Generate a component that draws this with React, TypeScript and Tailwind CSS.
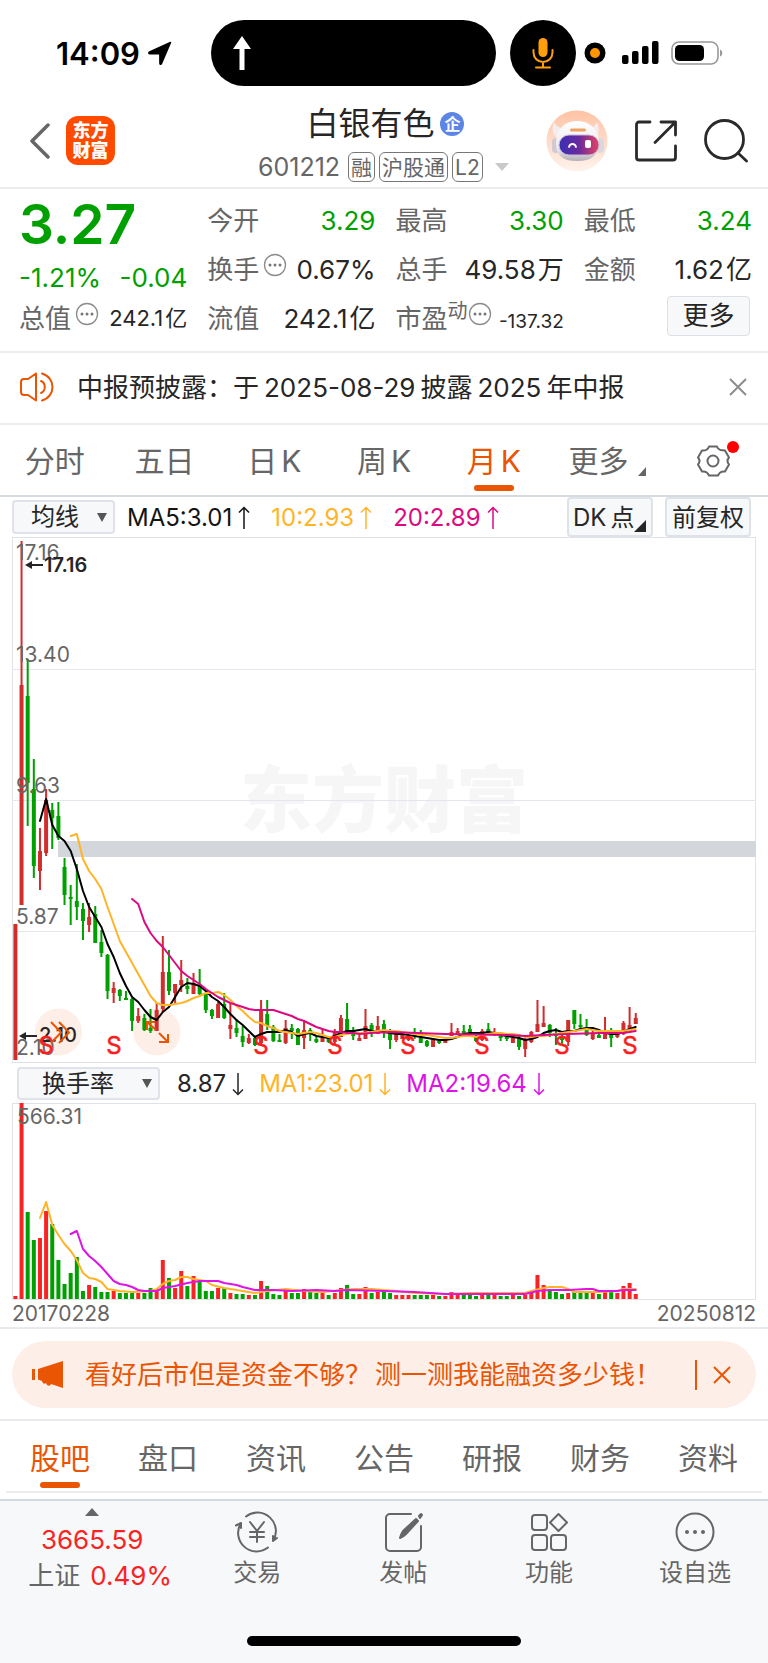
import type { ReactNode } from 'react';

type Dir = 'R' | 'G';
type Candle = [Dir, number, number, number, number];
type Point = [number, number];

const GREEN = '#00a000';
const RED = '#fa2323';
const CANDLE_RED = '#d02d2d';
const STEP = 6.142;
const ORIGIN = 15.4;
const barX = (i: number) => ORIGIN + i * STEP;

// direction, wick top, body top, body bottom, wick bottom
const candles: Candle[] = [
  ['R', 924, 924, 1060, 1060], ['R', 541, 685, 905, 905], ['G', 659, 696, 783, 826], ['G', 759, 789, 866, 878],
  ['R', 828, 851, 871, 890], ['R', 789, 800, 853, 856], ['G', 803, 810, 818, 849], ['G', 802, 816, 838, 840],
  ['G', 858, 867, 895, 905], ['G', 885, 897, 899, 925], ['G', 864, 901, 907, 920], ['G', 903, 909, 921, 940],
  ['R', 903, 917, 925, 932], ['G', 906, 914, 943, 943], ['G', 930, 942, 953, 957], ['G', 954, 955, 991, 999],
  ['R', 982, 988, 993, 1003], ['G', 989, 990, 996, 1001], ['G', 991, 998, 1000, 1000], ['G', 998, 999, 1021, 1031],
  ['R', 1008, 1016, 1021, 1023], ['G', 1014, 1018, 1030, 1031], ['G', 1009, 1028, 1031, 1033], ['R', 1003, 1010, 1031, 1031],
  ['R', 936, 972, 1009, 1012], ['G', 950, 972, 991, 995], ['R', 984, 984, 993, 1003], ['R', 960, 980, 985, 992],
  ['G', 978, 986, 989, 994], ['R', 973, 983, 994, 994], ['G', 969, 985, 994, 995], ['G', 991, 993, 1010, 1013],
  ['G', 1009, 1010, 1016, 1019], ['R', 1002, 1004, 1018, 1018], ['G', 993, 1004, 1018, 1019], ['R', 1003, 1025, 1029, 1039],
  ['G', 1019, 1028, 1033, 1037], ['G', 1026, 1036, 1042, 1047], ['R', 1034, 1038, 1043, 1044], ['G', 1036, 1038, 1045, 1046],
  ['R', 1000, 1010, 1043, 1046], ['G', 1000, 1014, 1026, 1030], ['G', 1025, 1027, 1041, 1042], ['G', 1034, 1040, 1042, 1042],
  ['R', 1020, 1028, 1043, 1044], ['G', 1024, 1028, 1031, 1039], ['G', 1028, 1029, 1045, 1045], ['R', 1022, 1030, 1038, 1049],
  ['G', 1028, 1030, 1033, 1041], ['G', 1037, 1039, 1042, 1043], ['R', 1029, 1037, 1042, 1042], ['G', 1037, 1038, 1042, 1043],
  ['R', 1029, 1032, 1042, 1044], ['R', 1015, 1018, 1037, 1037], ['G', 1003, 1019, 1031, 1032], ['G', 1027, 1031, 1036, 1040],
  ['R', 1035, 1038, 1041, 1041], ['R', 1009, 1026, 1039, 1039], ['G', 1023, 1025, 1032, 1037], ['R', 1016, 1026, 1034, 1034],
  ['G', 1020, 1024, 1033, 1038], ['G', 1029, 1031, 1040, 1049], ['R', 1033, 1035, 1040, 1042], ['R', 1034, 1035, 1039, 1039],
  ['R', 1035, 1037, 1040, 1041], ['G', 1028, 1032, 1036, 1039], ['G', 1030, 1038, 1043, 1043], ['G', 1040, 1041, 1046, 1047],
  ['R', 1038, 1039, 1047, 1047], ['G', 1039, 1041, 1043, 1044], ['R', 1039, 1040, 1043, 1043], ['R', 1023, 1032, 1036, 1036],
  ['R', 1028, 1031, 1034, 1034], ['G', 1025, 1031, 1033, 1035], ['G', 1025, 1029, 1032, 1035], ['G', 1035, 1037, 1041, 1042],
  ['R', 1029, 1031, 1040, 1041], ['G', 1023, 1029, 1033, 1034], ['R', 1028, 1032, 1034, 1036], ['G', 1034, 1036, 1038, 1041],
  ['G', 1036, 1037, 1039, 1041], ['R', 1037, 1038, 1043, 1043], ['G', 1035, 1039, 1047, 1050], ['R', 1038, 1040, 1049, 1057],
  ['R', 1031, 1032, 1042, 1043], ['R', 1000, 1024, 1032, 1032], ['R', 1006, 1023, 1027, 1027], ['G', 1024, 1025, 1033, 1037],
  ['G', 1028, 1034, 1036, 1045], ['G', 1035, 1037, 1040, 1045], ['R', 1020, 1020, 1042, 1046], ['G', 1010, 1010, 1024, 1029],
  ['G', 1014, 1025, 1027, 1030], ['G', 1019, 1028, 1035, 1036], ['R', 1030, 1033, 1039, 1040], ['G', 1034, 1035, 1038, 1038],
  ['R', 1017, 1031, 1039, 1039], ['G', 1028, 1030, 1038, 1047], ['R', 1031, 1034, 1037, 1038], ['R', 1021, 1023, 1034, 1035],
  ['R', 1007, 1025, 1031, 1031], ['R', 1013, 1018, 1024, 1024],
];

const from = (start: number, ys: number[]): Point[] => ys.map((y, k) => [start + k, y]);

const ma5 = from(4, [
  821, 799, 825, 836, 841, 851, 869, 891, 907, 917, 927, 944, 957, 973, 986, 997, 1002, 1010, 1017, 1020, 1012, 1007, 997,
  987, 983, 984, 986, 991, 997, 1001, 1007, 1014, 1020, 1025, 1031, 1037, 1034, 1032, 1032, 1032, 1030, 1032, 1036, 1034,
  1033, 1036, 1037, 1038, 1036, 1033, 1031, 1031, 1030, 1029, 1031, 1032, 1032, 1033, 1034, 1034, 1035, 1036, 1037, 1038,
  1039, 1040, 1040, 1039, 1037, 1034, 1033, 1033, 1033, 1032, 1033, 1035, 1036, 1037, 1038, 1040, 1039, 1037, 1033, 1031,
  1030, 1032, 1031, 1031, 1029, 1028, 1028, 1030, 1033, 1034, 1034, 1032, 1029, 1027,
]);

const ma10 = from(9, [
  836, 834, 859, 871, 879, 889, 907, 924, 941, 952, 963, 974, 985, 996, 1003, 1005, 1005, 1004, 1003, 1001, 998, 996, 993,
  993, 992, 995, 1000, 1006, 1011, 1017, 1022, 1023, 1026, 1028, 1031, 1032, 1033, 1034, 1033, 1032, 1033, 1035, 1037,
  1037, 1035, 1034, 1033, 1033, 1033, 1032, 1031, 1030, 1031, 1031, 1032, 1033, 1034, 1035, 1035, 1036, 1037, 1038, 1038,
  1037, 1036, 1036, 1037, 1036, 1034, 1033, 1033, 1034, 1034, 1035, 1037, 1037, 1036, 1036, 1035, 1034, 1033, 1032, 1031,
  1030, 1029, 1030, 1031, 1031, 1031, 1031, 1031, 1030, 1029,
]);

const ma20: Point[] = [
  ...from(19, [
    899, 904, 922, 933, 941, 947, 955, 963, 971, 976, 980, 984, 989, 993, 997, 1000, 1003, 1005, 1007, 1009, 1010, 1010,
    1010, 1010, 1012, 1014, 1016, 1019, 1021, 1024, 1027, 1029, 1031, 1032, 1032, 1033, 1033, 1034,
  ]),
  [58, 1033], [61, 1032], [70, 1034], [80, 1035], [83, 1036], [86, 1035], [90, 1034], [95, 1033], [99, 1033], [101, 1031],
];

const turnover = [
  3, 196, 87, 59, 61, 88, 75, 39, 15, 26, 42, 8, 14, 12, 7, 7, 8, 6, 6, 6, 6, 6, 11, 10, 39, 21, 11, 28, 13, 23, 18, 8, 8,
  11, 11, 6, 5, 5, 4, 4, 18, 13, 5, 4, 8, 6, 6, 10, 8, 6, 7, 4, 6, 11, 14, 5, 5, 12, 6, 7, 7, 6, 4, 4, 4, 4, 4, 4, 4, 3, 3,
  7, 6, 4, 4, 3, 4, 4, 4, 3, 3, 4, 3, 4, 7, 24, 14, 8, 7, 5, 6, 7, 7, 7, 6, 5, 9, 7, 6, 13, 16, 5,
];

const turnoverMa1: Point[] = [
  [4, 1217], [5, 1201], [6, 1224], [7, 1234], [8, 1243], [9, 1250], [10, 1259], [11, 1272], [12, 1277], [13, 1278],
  [14, 1281], [15, 1288], [17, 1290], [19, 1291], [22, 1290], [23, 1288], [24, 1283], [25, 1280], [26, 1279], [27, 1276],
  [28, 1276], [29, 1278], [31, 1280], [32, 1284], [34, 1287], [36, 1289], [39, 1292], [41, 1290], [44, 1288], [47, 1290],
  [50, 1291], [55, 1288], [58, 1288], [62, 1290], [65, 1292], [70, 1293], [74, 1292], [80, 1292], [83, 1292], [84, 1290],
  [86, 1287], [87, 1286], [89, 1286], [90, 1288], [91, 1291], [95, 1291], [98, 1290], [99, 1288], [101, 1288],
];

const turnoverMa2: Point[] = [
  [9, 1233], [10, 1230], [11, 1248], [12, 1255], [13, 1260], [14, 1266], [15, 1273], [16, 1280], [17, 1283], [18, 1284],
  [19, 1286], [20, 1289], [21, 1290], [23, 1290], [24, 1287], [26, 1285], [28, 1282], [30, 1280], [33, 1280], [34, 1282],
  [36, 1284], [37, 1286], [39, 1289], [42, 1289], [45, 1290], [49, 1289], [52, 1290], [54, 1289], [60, 1290], [65, 1291],
  [70, 1293], [83, 1293], [85, 1290], [87, 1289], [90, 1289], [93, 1288], [94, 1288], [95, 1290], [98, 1290], [99, 1289],
  [101, 1289],
];

const toPoints = (pts: Point[]) => pts.map(([i, y]) => `${barX(i).toFixed(1)},${y}`).join(' ');

function Line({ pts, color }: { pts: Point[]; color: string }) {
  return <polyline points={toPoints(pts)} fill="none" stroke={color} strokeWidth="2" strokeLinejoin="round" strokeLinecap="round" />;
}

function PriceChart() {
  const axis: [string, number][] = [['17.16', 560], ['13.40', 662], ['9.63', 793], ['5.87', 924], ['2.10', 1055]];
  const signals = [46, 114, 261, 335, 408, 482, 562, 630];
  return (
    <svg viewBox="12 537 744 527" className="block h-auto w-full" role="img" aria-label="月K线">
      <text x="384" y="826" textAnchor="middle" fontSize="72" fontWeight="900" fill="#f6f6f6">东方财富</text>
      <rect x="12.5" y="537.5" width="743" height="525" fill="none" stroke="#dfe2e6" />
      {[669.5, 800.5, 931.5].map((y) => <path key={y} d={`M12 ${y}H756`} stroke="#e3e7ed" strokeWidth="1" />)}
      <rect x="58" y="841" width="698" height="16" fill="#d3d6db" />
      <circle cx="58.5" cy="1032" r="23.5" fill="#fdeee7" />
      <circle cx="157" cy="1032" r="23.5" fill="#fdeee7" />
      {candles.map(([d, high, top, bottom, low], i) => {
        const fill = d === 'R' ? CANDLE_RED : GREEN;
        return (
          <g key={i} fill={fill}>
            <rect x={barX(i) - 1} y={high} width="2" height={low - high} />
            <rect x={barX(i) - 2} y={top} width="4" height={Math.max(2, bottom - top)} />
          </g>
        );
      })}
      <g fontSize="21" fill="#666">
        {axis.map(([t, y]) => <text key={t} x="16" y={y}>{t}</text>)}
      </g>
      <g fill="#262626" fontSize="20" fontWeight="600">
        <text x="44" y="572">17.16</text>
        <path d="M25 565l7-4v8zM31 564h12v2H31z" />
        <text x="39" y="1042" fontWeight="500">2.10</text>
        <path d="M19 1036l7-4v8zM25 1035h12v2H25z" />
      </g>
      <Line pts={ma5} color="#000" />
      <Line pts={ma10} color="#ffb428" />
      <Line pts={ma20} color="#dc0a82" />
      <g fill="none" stroke="#ea5504" strokeWidth="2">
        <path d="M51 1022l10 10.500-10 10.500M59 1022l10 10.500-10 10.500" />
        <path d="M147 1030v-8h8M147 1022l9 8M168 1034v8h-9M168 1042l-9-9" />
      </g>
      <g fontSize="24" fill="#fa1e1e" textAnchor="middle" stroke="#fa1e1e" strokeWidth="0.500">
        {signals.map((x) => <text key={x} x={x} y="1054">S</text>)}
      </g>
    </svg>
  );
}

function TurnoverChart() {
  return (
    <svg viewBox="12 1102 744 197" className="block h-auto w-full" role="img" aria-label="换手率">
      <rect x="12.5" y="1102.5" width="743" height="196" fill="none" stroke="#dfe2e6" />
      {turnover.map((h, i) => (
        <rect key={i} x={barX(i) - 2} y={1298 - h} width="4" height={h} fill={candles[i][0] === 'R' ? RED : GREEN} />
      ))}
      <text x="17" y="1123" fontSize="21" fill="#666">566.31</text>
      <Line pts={turnoverMa1} color="#ffb428" />
      <Line pts={turnoverMa2} color="#dc14e6" />
    </svg>
  );
}

function InfoDots() {
  return (
    <svg viewBox="0 0 24 24" className="mb-2.5 size-6 shrink-0">
      <circle cx="12" cy="12" r="10.500" fill="none" stroke="#8c8c8c" strokeWidth="1.300" />
      <g fill="#777"><circle cx="7" cy="12" r="1.500" /><circle cx="12" cy="12" r="1.500" /><circle cx="17" cy="12" r="1.500" /></g>
    </svg>
  );
}

function Stat({ label, value, unit, extra, tone = 'text-[#262626]', size = 'text-[26px]' }: {
  label: string; value: string; unit?: string; extra?: ReactNode; tone?: string; size?: string;
}) {
  return (
    <div className="flex h-[49px] items-center justify-between whitespace-nowrap">
      <dt className="flex items-center gap-1 text-[26px] text-[#666]">{label}{extra}</dt>
      <dd className={`flex gap-0.5 ${size} ${tone}`}><span>{value}</span>{unit && <span>{unit}</span>}</dd>
    </div>
  );
}

function TrendArrow({ down = false }: { down?: boolean }) {
  return (
    <svg viewBox="0 0 12 24" className="h-6 w-3 shrink-0" fill="none" stroke="currentColor" strokeWidth="1.500">
      <path d={down ? 'M6 1v22M1 17.500l5 5 5-5' : 'M6 23V1.500M1 6.500l5-5 5 5'} />
    </svg>
  );
}

function StatusBar() {
  return (
    <div className="flex h-24 items-center pt-2.5 pl-14">
      <div className="flex w-[155px] items-center gap-2">
        <span className="text-[31px] leading-none font-semibold text-black">14:09</span>
        <svg viewBox="0 0 24 24" className="size-6 shrink-0"><path d="M22.500 1.500 13.500 22.500c-.5 1.200-1.600 1-1.600-.2V12.800H2C.6 12.800.4 11.600 1.600 11z" stroke="#000" strokeLinejoin="round" strokeWidth="1.500" /></svg>
      </div>
      <div className="flex h-[66px] w-[285px] items-center rounded-full bg-black pl-[22px]">
        <svg viewBox="0 0 18 34" className="h-[34px] w-[18px]"><path d="M9 0 18 13H11.500V34h-5V13H0z" fill="#fff" /></svg>
      </div>
      <div className="ml-3.5 flex size-[66px] items-center justify-center rounded-full bg-black">
        <svg viewBox="0 0 22 32" className="h-8 w-[22px]" fill="none" stroke="#ff9f0a" strokeWidth="2" strokeLinecap="round">
          <rect x="6.500" y="1" width="9" height="19" rx="4.500" fill="#ff9f0a" stroke="none" />
          <path d="M1.500 13v2.500a9.500 9.500 0 0 0 19 0V13M11 25v5M4 30.500h14" />
        </svg>
      </div>
      <svg viewBox="0 0 22 22" className="ml-2 size-[22px]"><circle cx="11" cy="11" r="10.500" /><circle cx="11" cy="11" r="5" fill="#ff9500" /></svg>
      <svg viewBox="0 0 37 24" className="ml-4 h-6 w-[37px]">
        <rect x="0" y="14" width="6.500" height="9" rx="2" /><rect x="10" y="10" width="6.500" height="13" rx="2" />
        <rect x="20" y="5" width="6.500" height="18" rx="2" /><rect x="30" y="0" width="6.500" height="23" rx="2" />
      </svg>
      <svg viewBox="0 0 52 24" className="ml-3 h-6 w-[52px]">
        <rect x="1" y="1" width="46" height="22" rx="7" fill="none" stroke="#999" strokeWidth="1.600" />
        <rect x="4" y="4" width="29" height="16" rx="4.500" /><path d="M49 8.500c3 1 3 6 0 7z" fill="#999" />
      </svg>
    </div>
  );
}

function Robot() {
  return (
    <svg viewBox="0 0 62 62" className="size-[62px]">
      <defs>
        <linearGradient id="halo" x1="0" y1="0" x2="0" y2="1"><stop offset="0" stopColor="#fec3a4" /><stop offset="1" stopColor="#fff3ed" /></linearGradient>
        <linearGradient id="visor" x1="0" y1="0" x2="1" y2="0"><stop offset="0" stopColor="#3a2fb5" /><stop offset="0.500" stopColor="#6a2a9c" /><stop offset="1" stopColor="#e6435f" /></linearGradient>
        <linearGradient id="shell" x1="0" y1="0" x2="0" y2="1"><stop offset="0" stopColor="#fff" /><stop offset="0.700" stopColor="#ece9ec" /><stop offset="1" stopColor="#b5aeb5" /></linearGradient>
      </defs>
      <circle cx="31" cy="31" r="30.500" fill="url(#halo)" />
      <path d="M8 12c-3 8-1 13 4 16l8-9c-6 0-10-3-12-7zM51 12c3 8 2 13-3 16l-8-9c6 0 9-3 11-7z" fill="#f3edee" />
      <rect x="6" y="28" width="8" height="15" rx="4" fill="#cfcad2" /><rect x="50" y="28" width="8" height="15" rx="4" fill="#dcd7dc" />
      <path d="M10 33C10 20 18 11 31 11s22 9 22 22c0 12-7 18-22 18S10 45 10 33z" fill="url(#shell)" />
      <rect x="24" y="18.500" width="16" height="3" rx="1.500" fill="#f0a060" />
      <rect x="13" y="25" width="40" height="20" rx="10" fill="url(#visor)" stroke="#c9b8d8" strokeWidth="1" />
      <path d="M23 37c1-4 6-4 7 0" fill="none" stroke="#fff" strokeWidth="1.800" strokeLinecap="round" />
      <rect x="39" y="30" width="6" height="8" rx="2" fill="#fff" />
    </svg>
  );
}

function Tag({ children }: { children: ReactNode }) {
  return <span className="flex h-[30px] items-center rounded-md border-[1.5px] border-[#777] px-0.5 text-[21px] leading-none text-[#666]">{children}</span>;
}

function Header() {
  return (
    <header className="flex h-[93px] items-start border-b-2 border-[#ededed] pr-5 pl-[29px]">
      <div className="mt-5 flex w-[229px] items-center gap-4">
        <button aria-label="返回" className="shrink-0">
          <svg viewBox="0 0 21 36" className="h-9 w-[21px]" fill="none" stroke="#666" strokeWidth="3.500" strokeLinecap="round" strokeLinejoin="round"><path d="M19 2 3 18l16 16" /></svg>
        </button>
        <div className="flex size-[49px] flex-col items-center justify-center rounded-xl bg-[#ff4a00] text-[18px] leading-[20px] font-black text-white">
          <span>东方</span><span>财富</span>
        </div>
      </div>
      <div className="flex flex-col items-center">
        <h1 className="mt-[5px] flex items-center gap-1.5 pl-1 text-[32px] leading-[46px] text-[#262626]">
          白银有色
          <span className="flex size-6 items-center justify-center rounded-full bg-[#5b86e5] text-[16px] leading-none font-bold text-white">企</span>
        </h1>
        <div className="mt-[5px] flex items-center gap-1">
          <span className="mr-1 text-[25px] leading-none text-[#666]">601212</span>
          <Tag>融</Tag><Tag>沪股通</Tag><Tag>L2</Tag>
          <button aria-label="展开" className="ml-2"><svg viewBox="0 0 14 8" className="h-2 w-3.5"><path d="M0 0h14L7 8z" fill="#c9c9c9" /></svg></button>
        </div>
      </div>
      <div className="mt-[14px] ml-auto flex items-center gap-[27px]">
        <button aria-label="智能助手"><Robot /></button>
        <button aria-label="分享">
          <svg viewBox="0 0 42 42" className="size-[42px]" fill="none" stroke="#2a2a2a" strokeWidth="2.800" strokeLinecap="round" strokeLinejoin="round">
            <path d="M15 2H4a2.500 2.500 0 0 0-2.500 2.500v33A2.500 2.500 0 0 0 4 40h34a2.500 2.500 0 0 0 2.500-2.500V26M26 2h14.500v13M39 3.500 20 22.500" />
          </svg>
        </button>
        <button aria-label="搜索">
          <svg viewBox="0 0 44 44" className="size-11" fill="none" stroke="#2a2a2a" strokeWidth="2.800" strokeLinecap="round"><circle cx="20.500" cy="20.500" r="19" /><path d="m34 34 8.500 8" /></svg>
        </button>
      </div>
    </header>
  );
}

function Quote() {
  return (
    <section className="grid grid-cols-4 gap-x-5 border-b-2 border-[#ededed] pt-[7px] pr-4 pb-2 pl-[19px]">
      <div>
        <p className="h-[60px] text-[55px] leading-[56px] font-semibold text-[#00a000]">3.27</p>
        <p className="flex h-[42px] items-center justify-between text-[26px] text-[#00a000]"><span>-1.21%</span><span>-0.04</span></p>
        <dl className="-mt-1"><Stat label="总值" value="242.1" unit="亿" extra={<InfoDots />} size="text-[22px]" /></dl>
      </div>
      <dl><Stat label="今开" value="3.29" tone="text-[#00a000]" /><Stat label="换手" value="0.67%" extra={<InfoDots />} /><Stat label="流值" value="242.1" unit="亿" /></dl>
      <dl><Stat label="最高" value="3.30" tone="text-[#00a000]" /><Stat label="总手" value="49.58" unit="万" />
        <Stat label="市盈" value="-137.32" size="pt-2 text-[19px]" extra={<span className="-ml-1 flex items-center"><sup className="top-0 mb-4 text-[20px] leading-none">动</sup><InfoDots /></span>} /></dl>
      <dl><Stat label="最低" value="3.24" tone="text-[#00a000]" /><Stat label="金额" value="1.62" unit="亿" />
        <div className="flex justify-end pt-0.5 pr-0.5"><button className="h-10 w-[83px] rounded border border-[#dcdfe6] bg-[#f7f8fa] text-[26px] leading-none text-[#262626]">更多</button></div></dl>
    </section>
  );
}

function Notice() {
  return (
    <section className="flex h-[72px] items-center border-b-2 border-[#ededed] pr-[21px] pb-0.5 pl-5 text-[26px] text-[#262626]">
      <svg viewBox="0 0 34 30" className="mr-[23px] h-[30px] w-[34px] shrink-0" fill="none" stroke="#ea5504" strokeWidth="2" strokeLinecap="round" strokeLinejoin="round">
        <path d="M16 1.500 8 7H4a3 3 0 0 0-3 3v10a3 3 0 0 0 3 3h4l8 5.500zM21 9c5 2 5 10 0 12M22 1.500c14 4 14 23 0 27" />
      </svg>
      <p className="flex flex-1 gap-[5px] whitespace-nowrap"><span>中报预披露：于</span><span>2025-08-29</span><span>披露</span><span>2025</span><span>年中报</span></p>
      <button aria-label="关闭公告"><svg viewBox="0 0 18 18" className="size-[18px]" stroke="#8c8c8c" strokeWidth="2"><path d="m1 1 16 16M17 1 1 17" /></svg></button>
    </section>
  );
}

function PeriodTabs() {
  return (
    <nav className="grid h-[72px] grid-cols-7 border-b-2 border-[#d6dbe0] pt-0.5 text-[30px] text-[#666]">
      <button>分时</button>
      <button>五日</button>
      <button className="flex items-center justify-center gap-1"><span>日</span><span>K</span></button>
      <button className="flex items-center justify-center gap-1"><span>周</span><span>K</span></button>
      <button className="relative flex items-center justify-center gap-1 text-[#ea5504]">
        <span>月</span><span>K</span>
        <span className="absolute bottom-1 left-1/2 h-1.5 w-10 -translate-x-1/2 rounded-full bg-[#ea5504]" />
      </button>
      <button className="flex items-center justify-center gap-2.5 pl-2">更多<svg viewBox="0 0 8 9" className="mt-5 h-[9px] w-2"><path d="M8 0v9H0z" fill="#666" /></svg></button>
      <button aria-label="设置" className="flex items-center justify-center">
        <span className="relative">
          <svg viewBox="0 0 36 32" className="h-8 w-9" fill="none" stroke="#666" strokeWidth="2" strokeLinejoin="round">
            <path d="M14 1.500h8q1.500 4 6 3.800l2 .2 4 7q-3 3.500 0 7l-4 7q-5-.8-7 4h-9q-2-4.800-7-4l-4-7q3-3.500 0-7l4-7q5.500.5 7-4z" /><circle cx="18" cy="16" r="5.500" />
          </svg>
          <span className="absolute -top-1 -right-2 size-3 rounded-full bg-[#ff0000]" />
        </span>
      </button>
    </nav>
  );
}

function Indicator({ children, className, down }: { children: ReactNode; className: string; down?: boolean }) {
  return <span className={`flex items-center gap-1.5 ${className}`}>{children}<TrendArrow down={down} /></span>;
}

function Caret() {
  return <svg viewBox="0 0 10 9" className="h-[9px] w-2.5"><path d="M0 0h10L5 9z" fill="#555" /></svg>;
}

const pill = 'rounded border-2 border-[#dfe2e8] bg-[#f7f8fa] text-[#262626]';

function Charts() {
  return (
    <section className="px-3">
      <div className="flex h-10 items-center text-[24px] whitespace-nowrap">
        <button className={`${pill} flex h-[34px] w-[103px] items-center justify-between pr-1.5 pl-[17px] leading-none`}>均线<Caret /></button>
        <Indicator className="ml-3 pt-0.5 text-[#141414]">MA5:3.01</Indicator>
        <Indicator className="ml-[21px] pt-0.5 text-[#ffb428]">10:2.93</Indicator>
        <Indicator className="ml-[21px] pt-0.5 text-[#dc0a82]">20:2.89</Indicator>
        <button className={`${pill} mr-3 ml-auto flex h-10 w-[86px] items-center pt-0.5 pl-1 leading-none`}>DK<span className="ml-1">点</span><svg viewBox="0 0 12 12" className="mt-4 size-3 shrink-0"><path d="M12 0v12H0z" fill="#262626" /></svg></button>
        <button className={`${pill} mr-[5px] h-10 w-[86px] pt-0.5 leading-none`}>前复权</button>
      </div>
      <PriceChart />
      <div className="flex h-[39px] items-center pl-[5px] text-[24px] whitespace-nowrap">
        <button className={`${pill} flex h-[33px] w-[143px] items-center justify-between pr-1.5 pl-[23px] leading-none`}>换手率<Caret /></button>
        <Indicator down className="ml-[17px] text-[#262626]">8.87</Indicator>
        <Indicator down className="ml-[15px] text-[#ffb428]">MA1:23.01</Indicator>
        <Indicator down className="ml-[15px] text-[#dc14e6]">MA2:19.64</Indicator>
      </div>
      <TurnoverChart />
      <div className="flex justify-between text-[21px] leading-[27px] text-[#666]"><time>20170228</time><time>20250812</time></div>
    </section>
  );
}

function Promo() {
  return (
    <section className="border-y-2 border-[#e8eaee] px-3 pt-3 pb-[11px]">
      <div className="flex h-[67px] items-center rounded-full bg-[#fdeee7] pr-[25px] pl-5 text-[26px] text-[#ea5504]">
        <svg viewBox="0 0 32 27" className="mr-[21px] h-[27px] w-8 shrink-0" fill="#ea5504"><path d="M0 8h3v11H0zM6 8 31 0v27l-12-4q-1 3-4 1l-1-2q-3 2-4-2l-4-1.500z" /></svg>
        <a href="#finance" className="flex flex-1 gap-1 whitespace-nowrap"><span>看好后市但是资金不够？</span><span>测一测我能融资多少钱！</span></a>
        <button aria-label="关闭" className="border-l-2 border-[#ea5504] py-[6px] pl-4"><svg viewBox="0 0 18 18" className="size-[18px]" stroke="#ea5504" strokeWidth="2"><path d="m1 1 16 16M17 1 1 17" /></svg></button>
      </div>
    </section>
  );
}

function SectionTabs() {
  return (
    <div className="px-1.5 pb-1.5">
      <nav className="grid h-[72px] grid-cols-7 border-b-2 border-[#ededed] text-[30px] text-[#666]">
        {['股吧', '盘口', '资讯', '公告', '研报', '财务', '资料'].map((t, i) => (
          <button key={t} className={i === 0 ? 'relative pt-1 text-[#ea5504]' : 'pt-1'}>
            {t}{i === 0 && <span className="absolute bottom-[3px] left-1/2 h-1.5 w-10 -translate-x-1/2 rounded-full bg-[#ea5504]" />}
          </button>
        ))}
      </nav>
    </div>
  );
}

function NavItem({ label, children }: { label: string; children: ReactNode }) {
  return (
    <button className="flex flex-1 flex-col items-center gap-0.5 pt-2.5 text-[24px] leading-[36px] text-[#666]">
      <svg viewBox="0 0 44 42" className="h-[42px] w-11" fill="none" stroke="#666" strokeWidth="2" strokeLinecap="round" strokeLinejoin="round">{children}</svg>
      {label}
    </button>
  );
}

function BottomBar() {
  return (
    <footer className="border-t-2 border-[#d3dae0] bg-[#f7f8fa] pb-[17px]">
      <div className="flex h-[120px] items-start">
        <button className="flex w-[24%] flex-col items-center pt-[7px] text-[26px] leading-[36px] text-[#fa2323]">
          <svg viewBox="0 0 14 8" className="mb-1.5 h-2 w-3.5"><path d="M0 8h14L7 0z" fill="#666" /></svg>
          <span>3665.59</span>
          <span className="flex gap-2.5 pl-4"><span className="text-[#666]">上证</span>0.49%</span>
        </button>
        <NavItem label="交易">
          <path d="M11 5.500A18.500 18.500 0 0 1 38 30l4-3M33 36.500A18.500 18.500 0 0 1 6 12L1 14.500M38 30V25M6 12v5" />
          <path d="m15 11 7 9 7-9M15 21h14M15 26h14M22 20v11" />
        </NavItem>
        <NavItem label="发帖">
          <path d="M30 3H9a4 4 0 0 0-4 4v29a4 4 0 0 0 4 4h27a4 4 0 0 0 4-4V15" /><path d="M19 27q1-4 3-7L35 8l2 2-12 13q-3 3-6 4zM38 5l2-2 1 1-2 3z" fill="#666" />
        </NavItem>
        <NavItem label="功能">
          <rect x="5" y="4" width="15" height="15" rx="3" /><rect x="5" y="24" width="15" height="15" rx="3" /><rect x="24" y="24" width="15" height="15" rx="3" /><path d="M31.500 3 40 11.500 31.500 20 23 11.500z" />
        </NavItem>
        <NavItem label="设自选">
          <circle cx="22" cy="21" r="18.500" /><g fill="#666" stroke="none"><circle cx="14" cy="21" r="2" /><circle cx="22" cy="21" r="2" /><circle cx="30" cy="21" r="2" /></g>
        </NavItem>
      </div>
      <div className="mx-auto mt-[15px] h-[10px] w-[274px] rounded-full bg-black" />
    </footer>
  );
}

export default function App() {
  return (
    <main className="w-full bg-white [font-family:Inter,'Noto_Sans_CJK_SC',sans-serif]">
      <StatusBar />
      <Header />
      <Quote />
      <Notice />
      <PeriodTabs />
      <Charts />
      <Promo />
      <SectionTabs />
      <BottomBar />
    </main>
  );
}
